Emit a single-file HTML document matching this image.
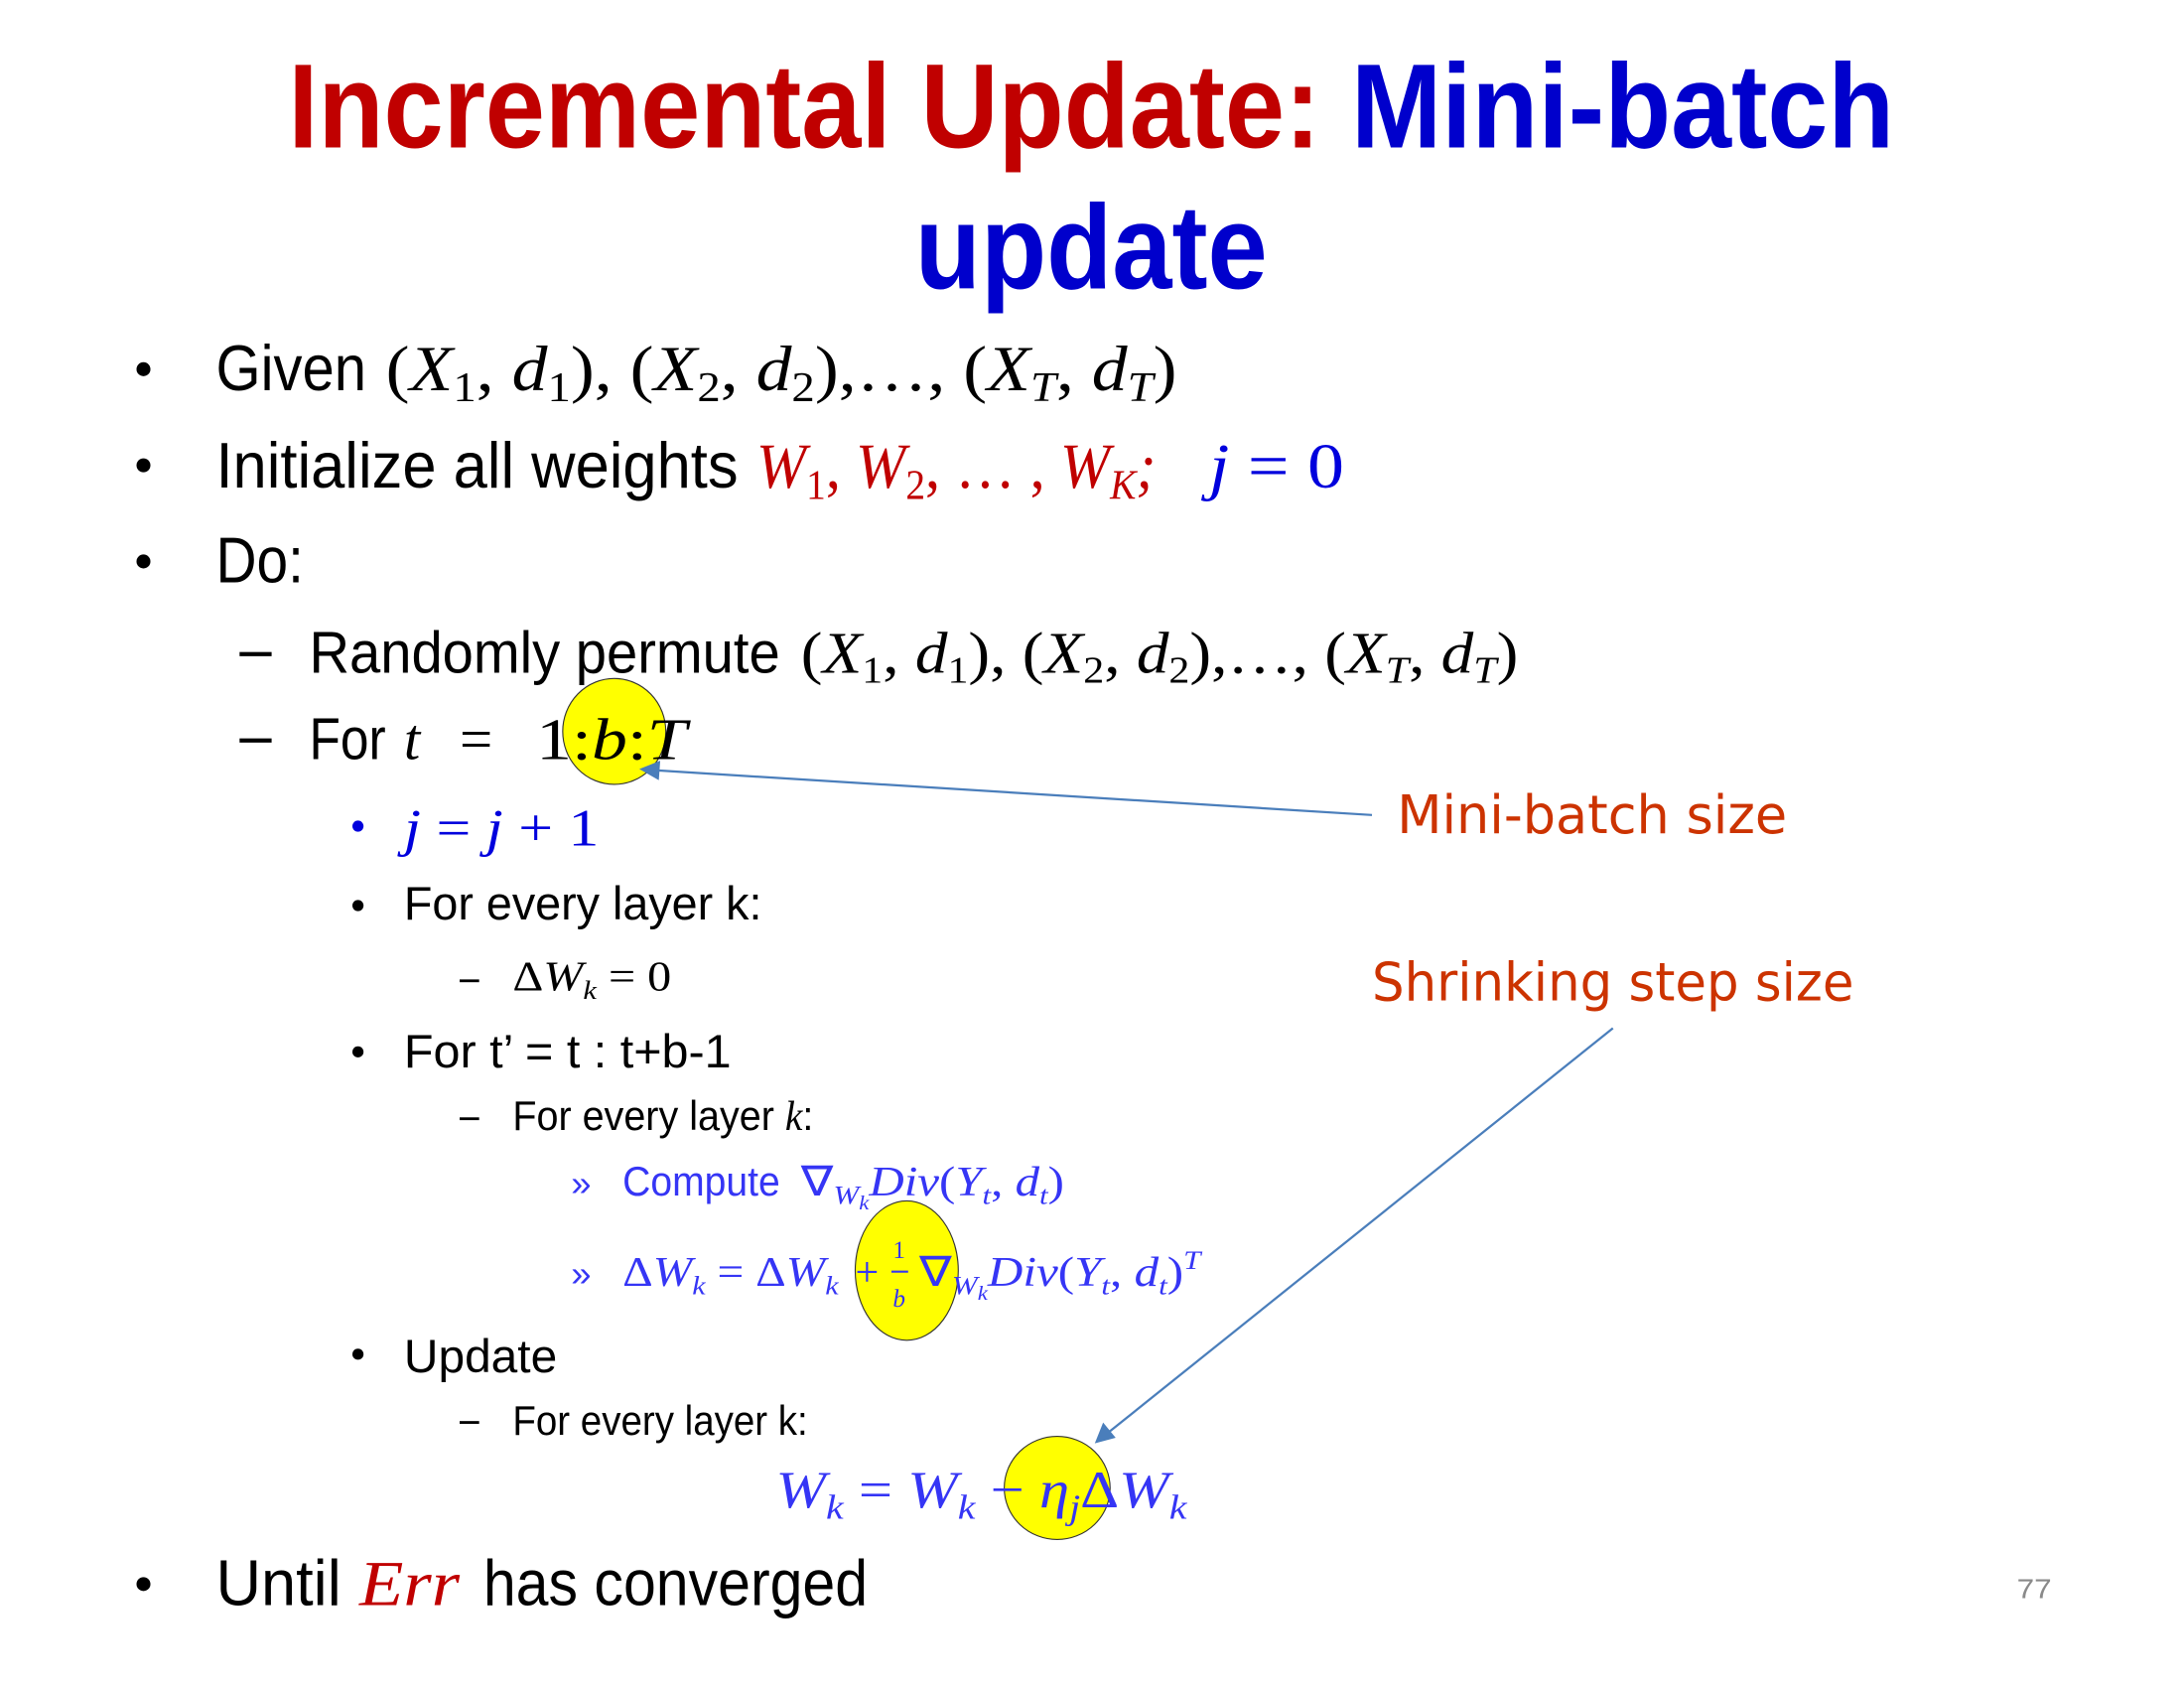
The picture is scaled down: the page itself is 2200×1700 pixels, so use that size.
<!DOCTYPE html>
<html><head><meta charset="utf-8"><style>html,body{margin:0;padding:0;background:#fff;}svg{display:block}</style></head>
<body>
<svg width="2200" height="1700" viewBox="0 0 1568 1211.6" preserveAspectRatio="none" xmlns="http://www.w3.org/2000/svg">
<style>
.s{font-family:"Liberation Sans",sans-serif;}
.m{font-family:"Liberation Serif",serif;font-style:italic;}
.n{font-family:"Liberation Serif",serif;font-style:normal;}
.b{font-weight:bold;}
.ann{font-family:"DejaVu Sans",sans-serif;fill:#cc3300;}
</style>
<!-- Title -->
<text class="s b" x="207" y="106" font-size="86" fill="#c00000" textLength="741" lengthAdjust="spacingAndGlyphs">Incremental Update:</text>
<text class="s b" x="970" y="106" font-size="86" fill="#0000cc" textLength="390" lengthAdjust="spacingAndGlyphs">Mini-batch</text>
<text class="s b" x="657" y="207" font-size="86" fill="#0000cc" textLength="253" lengthAdjust="spacingAndGlyphs">update</text>

<!-- yellow circles -->
<ellipse cx="441" cy="525" rx="37" ry="38" fill="#ffff00" stroke="#333" stroke-width="0.8"/>
<ellipse cx="651" cy="912" rx="37" ry="50" fill="#ffff00" stroke="#333" stroke-width="0.8"/>
<ellipse cx="759" cy="1068" rx="38" ry="37" fill="#ffff00" stroke="#333" stroke-width="0.8"/>

<!-- bullets level1 -->
<circle cx="103" cy="265" r="5"/>
<circle cx="103" cy="334" r="5"/>
<circle cx="103" cy="403" r="5"/>
<circle cx="103" cy="1137" r="5"/>

<!-- Line 1 -->
<text class="s" x="155" y="280" font-size="46" textLength="108" lengthAdjust="spacingAndGlyphs">Given</text>
<text class="m" x="277" y="280" font-size="46" textLength="568" lengthAdjust="spacingAndGlyphs"><tspan class="n">(</tspan>X<tspan class="n" font-size="30" dy="8">1</tspan><tspan class="n" dy="-8">, </tspan>d<tspan class="n" font-size="30" dy="8">1</tspan><tspan class="n" dy="-8">), (</tspan>X<tspan class="n" font-size="30" dy="8">2</tspan><tspan class="n" dy="-8">, </tspan>d<tspan class="n" font-size="30" dy="8">2</tspan><tspan class="n" dy="-8">),…, (</tspan>X<tspan font-size="30" dy="8">T</tspan><tspan class="n" dy="-8">, </tspan>d<tspan font-size="30" dy="8">T</tspan><tspan class="n" dy="-8">)</tspan></text>

<!-- Line 2 -->
<text class="s" x="155" y="350" font-size="46" textLength="375" lengthAdjust="spacingAndGlyphs">Initialize all weights</text>
<text class="m" x="543" y="350" font-size="46" fill="#c00000" textLength="287" lengthAdjust="spacingAndGlyphs">W<tspan class="n" font-size="30" dy="8">1</tspan><tspan class="n" dy="-8">, </tspan>W<tspan class="n" font-size="30" dy="8">2</tspan><tspan class="n" dy="-8">, … , </tspan>W<tspan font-size="30" dy="8">K</tspan><tspan dy="-8">;</tspan></text>
<text class="m" x="868" y="350" font-size="46" fill="#0000dd" textLength="97" lengthAdjust="spacingAndGlyphs">j <tspan class="n">= 0</tspan></text>

<!-- Line 3 -->
<text class="s" x="155" y="418" font-size="46" textLength="63" lengthAdjust="spacingAndGlyphs">Do:</text>

<!-- Line 4 -->
<rect x="172" y="468" width="23" height="3"/>
<text class="s" x="222" y="483" font-size="42" textLength="338" lengthAdjust="spacingAndGlyphs">Randomly permute</text>
<text class="m" x="575" y="483" font-size="42" textLength="515" lengthAdjust="spacingAndGlyphs"><tspan class="n">(</tspan>X<tspan class="n" font-size="27" dy="7">1</tspan><tspan class="n" dy="-7">, </tspan>d<tspan class="n" font-size="27" dy="7">1</tspan><tspan class="n" dy="-7">), (</tspan>X<tspan class="n" font-size="27" dy="7">2</tspan><tspan class="n" dy="-7">, </tspan>d<tspan class="n" font-size="27" dy="7">2</tspan><tspan class="n" dy="-7">),…, (</tspan>X<tspan font-size="27" dy="7">T</tspan><tspan class="n" dy="-7">, </tspan>d<tspan font-size="27" dy="7">T</tspan><tspan class="n" dy="-7">)</tspan></text>

<!-- Line 5 -->
<rect x="172" y="530" width="23" height="3"/>
<text class="s" x="222" y="545" font-size="42" textLength="55" lengthAdjust="spacingAndGlyphs">For</text>
<text class="m" x="290" y="545" font-size="42">t</text>
<text class="n" x="330" y="545" font-size="42">=</text>
<text class="n" x="385" y="545" font-size="42" textLength="108" lengthAdjust="spacingAndGlyphs">1:<tspan class="m">b</tspan>:<tspan class="m">T</tspan></text>

<!-- Line 6 -->
<circle cx="257" cy="593" r="4" fill="#0000dd"/>
<text class="m" x="290" y="607" font-size="38" fill="#0000dd" textLength="140" lengthAdjust="spacingAndGlyphs">j <tspan class="n">= </tspan>j <tspan class="n">+ 1</tspan></text>

<!-- Line 7 -->
<circle cx="257" cy="650" r="4"/>
<text class="s" x="290" y="660" font-size="34" textLength="257" lengthAdjust="spacingAndGlyphs">For every layer k:</text>

<!-- Line 8 -->
<rect x="330" y="703" width="14" height="2"/>
<text class="m" x="368" y="711" font-size="30" textLength="114" lengthAdjust="spacingAndGlyphs"><tspan class="n">Δ</tspan>W<tspan font-size="19" dy="6">k</tspan><tspan class="n" dy="-6"> = 0</tspan></text>

<!-- Line 9 -->
<circle cx="257" cy="755" r="4"/>
<text class="s" x="290" y="766" font-size="34" textLength="235" lengthAdjust="spacingAndGlyphs">For t’ = t : t+b-1</text>

<!-- Line 10 -->
<rect x="330" y="802" width="14" height="2"/>
<text class="s" x="368" y="811" font-size="30" textLength="216" lengthAdjust="spacingAndGlyphs">For every layer <tspan class="m">k</tspan>:</text>

<!-- Line 11 -->
<text class="s" x="410" y="858" font-size="26" fill="#3535f5">»</text>
<text class="s" x="447" y="858" font-size="30" fill="#3535f5" textLength="113" lengthAdjust="spacingAndGlyphs">Compute</text>
<text class="m" x="575" y="858" font-size="30" fill="#3535f5" textLength="189" lengthAdjust="spacingAndGlyphs"><tspan class="n">∇</tspan><tspan font-size="19" dy="6">W</tspan><tspan font-size="14" dy="4">k</tspan><tspan dy="-10">Div</tspan><tspan class="n">(</tspan>Y<tspan font-size="19" dy="6">t</tspan><tspan class="n" dy="-6">, </tspan>d<tspan font-size="19" dy="6">t</tspan><tspan class="n" dy="-6">)</tspan></text>

<!-- Line 12 -->
<text class="s" x="410" y="923" font-size="26" fill="#3535f5">»</text>
<text class="m" x="447" y="923" font-size="30" fill="#3535f5" textLength="155" lengthAdjust="spacingAndGlyphs"><tspan class="n">Δ</tspan>W<tspan font-size="19" dy="6">k</tspan><tspan class="n" dy="-6"> = Δ</tspan>W<tspan font-size="19" dy="6">k</tspan></text>
<text class="n" x="614" y="923" font-size="30" fill="#3535f5">+</text>
<text class="n" x="641" y="903" font-size="18" fill="#3535f5">1</text>
<rect x="640" y="912" width="12" height="1.5" fill="#3535f5"/>
<text class="m" x="641" y="938" font-size="18" fill="#3535f5">b</text>
<text class="m" x="660" y="923" font-size="30" fill="#3535f5" textLength="202" lengthAdjust="spacingAndGlyphs"><tspan class="n">∇</tspan><tspan font-size="19" dy="6">W</tspan><tspan font-size="14" dy="4">k</tspan><tspan dy="-10">Div</tspan><tspan class="n">(</tspan>Y<tspan font-size="19" dy="6">t</tspan><tspan class="n" dy="-6">, </tspan>d<tspan font-size="19" dy="6">t</tspan><tspan class="n" dy="-6">)</tspan><tspan font-size="19" dy="-12">T</tspan></text>

<!-- Line 13 -->
<circle cx="257" cy="972" r="4"/>
<text class="s" x="290" y="985" font-size="34" textLength="110" lengthAdjust="spacingAndGlyphs">Update</text>

<!-- Line 14 -->
<rect x="330" y="1020" width="14" height="2"/>
<text class="s" x="368" y="1030" font-size="30" textLength="212" lengthAdjust="spacingAndGlyphs">For every layer k:</text>

<!-- Line 15 -->
<text class="m" x="557" y="1082" font-size="38" fill="#3535f5" textLength="295" lengthAdjust="spacingAndGlyphs">W<tspan font-size="25" dy="8">k</tspan><tspan class="n" dy="-8"> = </tspan>W<tspan font-size="25" dy="8">k</tspan><tspan class="n" dy="-8"> − </tspan>η<tspan font-size="25" dy="8">j</tspan><tspan class="n" dy="-8">Δ</tspan>W<tspan font-size="25" dy="8">k</tspan></text>

<!-- Line 16 -->
<text class="s" x="155" y="1152" font-size="46" textLength="90" lengthAdjust="spacingAndGlyphs">Until</text>
<text class="m" x="258" y="1152" font-size="46" fill="#c00000" textLength="72" lengthAdjust="spacingAndGlyphs">Err</text>
<text class="s" x="347" y="1152" font-size="46" textLength="276" lengthAdjust="spacingAndGlyphs">has converged</text>

<!-- page number -->
<text class="s" x="1448" y="1147" font-size="20" fill="#8a8a8a" textLength="25" lengthAdjust="spacingAndGlyphs">77</text>

<!-- annotations -->
<text class="ann" x="1003" y="598" font-size="38" textLength="280" lengthAdjust="spacingAndGlyphs">Mini-batch size</text>
<text class="ann" x="985" y="718" font-size="38" textLength="346" lengthAdjust="spacingAndGlyphs">Shrinking step size</text>

<!-- arrows -->
<line x1="985" y1="585" x2="472" y2="553" stroke="#4a7ebb" stroke-width="1.6"/>
<polygon points="459,552 474,546 473,560" fill="#4a7ebb"/>
<line x1="1158" y1="738" x2="796" y2="1028" stroke="#4a7ebb" stroke-width="1.6"/>
<polygon points="786,1036 792,1021 801,1032" fill="#4a7ebb"/>
</svg>
</body></html>
